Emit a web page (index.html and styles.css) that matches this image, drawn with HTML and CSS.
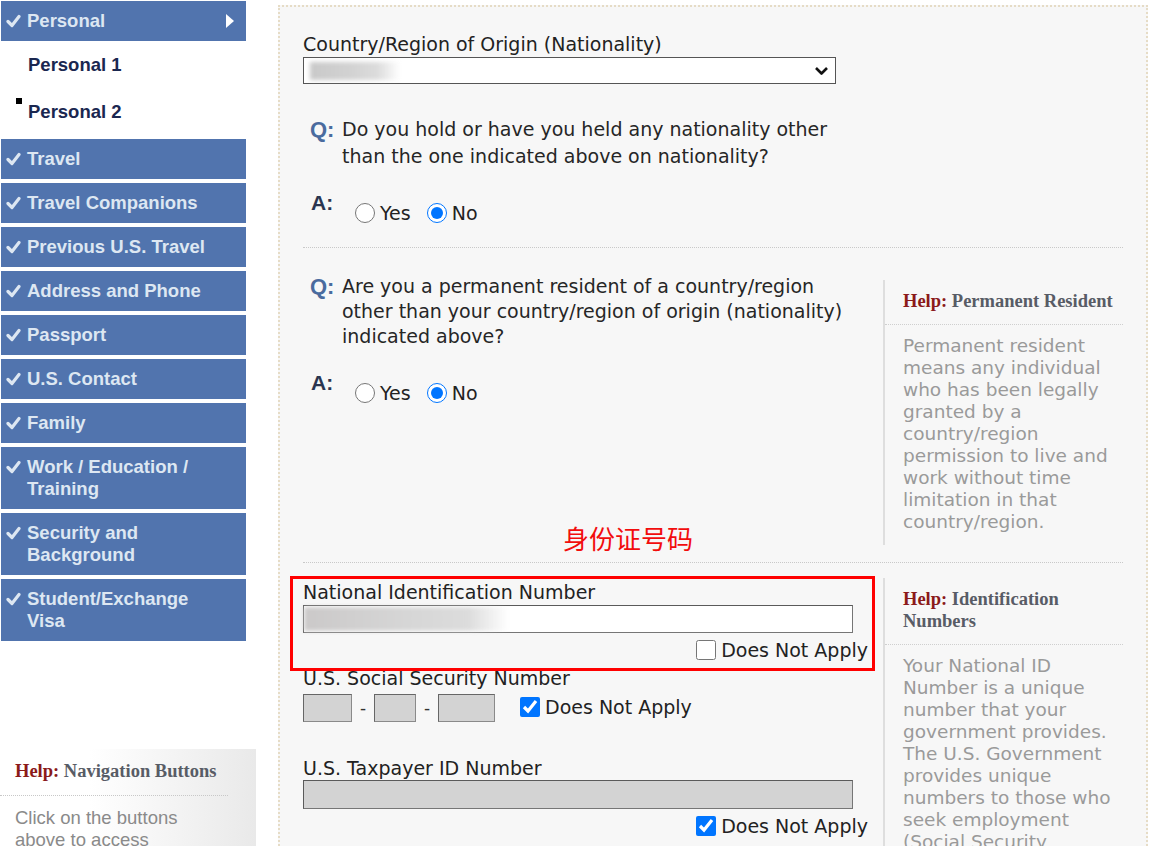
FILE: index.html
```html
<!DOCTYPE html>
<html lang="en">
<head>
<meta charset="utf-8">
<title>Personal 2</title>
<link rel="stylesheet" href="styles.css">
</head>
<body>
<div class="page">
  <aside class="sidebar">
    <ul class="nav">
      <li class="nav-item head">
        <svg class="chk" width="15" height="22" viewBox="0 0 15 22"><path d="M2 11.5 L6 15.5 L13 6.5" fill="none" stroke="#dde7f2" stroke-width="3.2" stroke-linecap="round" stroke-linejoin="round"/></svg>
        <span class="nav-label">Personal</span>
        <svg class="arrow" width="8" height="14" viewBox="0 0 8 14"><polygon points="0,0 8,7 0,14" fill="#ffffff"/></svg>
      </li>
      <li class="sub">
        <ul class="sublist">
          <li>Personal 1</li>
          <li class="current">Personal 2</li>
        </ul>
      </li>
      <li class="nav-item"><svg class="chk" width="15" height="22" viewBox="0 0 15 22"><path d="M2 11.5 L6 15.5 L13 6.5" fill="none" stroke="#dde7f2" stroke-width="3.2" stroke-linecap="round" stroke-linejoin="round"/></svg><span class="nav-label">Travel</span></li>
      <li class="nav-item"><svg class="chk" width="15" height="22" viewBox="0 0 15 22"><path d="M2 11.5 L6 15.5 L13 6.5" fill="none" stroke="#dde7f2" stroke-width="3.2" stroke-linecap="round" stroke-linejoin="round"/></svg><span class="nav-label">Travel Companions</span></li>
      <li class="nav-item"><svg class="chk" width="15" height="22" viewBox="0 0 15 22"><path d="M2 11.5 L6 15.5 L13 6.5" fill="none" stroke="#dde7f2" stroke-width="3.2" stroke-linecap="round" stroke-linejoin="round"/></svg><span class="nav-label">Previous U.S. Travel</span></li>
      <li class="nav-item"><svg class="chk" width="15" height="22" viewBox="0 0 15 22"><path d="M2 11.5 L6 15.5 L13 6.5" fill="none" stroke="#dde7f2" stroke-width="3.2" stroke-linecap="round" stroke-linejoin="round"/></svg><span class="nav-label">Address and Phone</span></li>
      <li class="nav-item"><svg class="chk" width="15" height="22" viewBox="0 0 15 22"><path d="M2 11.5 L6 15.5 L13 6.5" fill="none" stroke="#dde7f2" stroke-width="3.2" stroke-linecap="round" stroke-linejoin="round"/></svg><span class="nav-label">Passport</span></li>
      <li class="nav-item"><svg class="chk" width="15" height="22" viewBox="0 0 15 22"><path d="M2 11.5 L6 15.5 L13 6.5" fill="none" stroke="#dde7f2" stroke-width="3.2" stroke-linecap="round" stroke-linejoin="round"/></svg><span class="nav-label">U.S. Contact</span></li>
      <li class="nav-item"><svg class="chk" width="15" height="22" viewBox="0 0 15 22"><path d="M2 11.5 L6 15.5 L13 6.5" fill="none" stroke="#dde7f2" stroke-width="3.2" stroke-linecap="round" stroke-linejoin="round"/></svg><span class="nav-label">Family</span></li>
      <li class="nav-item"><svg class="chk" width="15" height="22" viewBox="0 0 15 22"><path d="M2 11.5 L6 15.5 L13 6.5" fill="none" stroke="#dde7f2" stroke-width="3.2" stroke-linecap="round" stroke-linejoin="round"/></svg><span class="nav-label">Work / Education /<br>Training</span></li>
      <li class="nav-item"><svg class="chk" width="15" height="22" viewBox="0 0 15 22"><path d="M2 11.5 L6 15.5 L13 6.5" fill="none" stroke="#dde7f2" stroke-width="3.2" stroke-linecap="round" stroke-linejoin="round"/></svg><span class="nav-label">Security and<br>Background</span></li>
      <li class="nav-item"><svg class="chk" width="15" height="22" viewBox="0 0 15 22"><path d="M2 11.5 L6 15.5 L13 6.5" fill="none" stroke="#dde7f2" stroke-width="3.2" stroke-linecap="round" stroke-linejoin="round"/></svg><span class="nav-label">Student/Exchange<br>Visa</span></li>
    </ul>
    <div class="side-help">
      <div class="help-title"><span class="help-word">Help:</span> Navigation Buttons</div>
      <div class="side-help-body">Click on the buttons above to access different sections of the application.</div>
    </div>
  </aside>

  <main class="panel">
    <section class="block block-one">
      <div class="lbl">Country/Region of Origin (Nationality)</div>
      <div class="select"><span class="blur blur-select"></span>
        <svg class="chev" width="15" height="10" viewBox="0 0 15 10"><polyline points="2,2 7.5,7.5 13,2" fill="none" stroke="#111" stroke-width="2.6" stroke-linejoin="round"/></svg>
      </div>
      <div class="q"><span class="q-mark">Q:</span><span class="q-text">Do you hold or have you held any nationality other than the one indicated above on nationality?</span></div>
      <div class="a"><span class="a-mark">A:</span>
        <div class="opts">
          <label class="opt"><input type="radio" name="r1">Yes</label>
          <label class="opt"><input type="radio" name="r1" checked>No</label>
        </div>
      </div>
    </section>

    <section class="block block-two">
      <div class="left">
        <div class="q q-wide"><span class="q-mark">Q:</span><span class="q-text">Are you a permanent resident of a country/region other than your country/region of origin (nationality) indicated above?</span></div>
        <div class="a"><span class="a-mark">A:</span>
          <div class="opts">
            <label class="opt"><input type="radio" name="r2">Yes</label>
            <label class="opt"><input type="radio" name="r2" checked>No</label>
          </div>
        </div>
      </div>
      <div class="help help-pr">
        <div class="help-title"><span class="help-word">Help:</span> Permanent Resident</div>
        <div class="help-body">Permanent resident means any individual who has been legally granted by a country/region permission to live and work without time limitation in that country/region.</div>
      </div>
    </section>

    <section class="block block-three">
      <div class="left">
        <div class="lbl">National Identification Number</div>
        <div class="txt"><span class="blur blur-id"></span></div>
        <div class="na"><label class="opt"><input type="checkbox">Does Not Apply</label></div>
        <div class="lbl lbl-ssn">U.S. Social Security Number</div>
        <div class="ssn">
          <span class="box box1"></span><span class="sep">-</span><span class="box box2"></span><span class="sep">-</span><span class="box box3"></span>
          <label class="opt opt-ssn"><input type="checkbox" checked>Does Not Apply</label>
        </div>
        <div class="lbl lbl-tax">U.S. Taxpayer ID Number</div>
        <div class="txt txt-off"></div>
        <div class="na"><label class="opt"><input type="checkbox" checked>Does Not Apply</label></div>
      </div>
      <div class="help help-id">
        <div class="help-title"><span class="help-word">Help:</span> Identification Numbers</div>
        <div class="help-body">Your National ID Number is a unique number that your government provides. The U.S. Government provides unique numbers to those who seek employment (Social Security Numbers) and for tax purposes.</div>
      </div>
    </section>

    <div class="note">身份证号码</div>
    <div class="mark-box"></div>
  </main>
</div>
</body>
</html>
```

FILE: styles.css
```css
html, body {
  margin: 0;
  padding: 0;
  height: 846px;
  overflow: hidden;
  background: #ffffff;
}

.page {
  display: flex;
  align-items: flex-start;
}

/* ---------- Sidebar ---------- */
.sidebar {
  width: 256px;
  flex: none;
  padding-top: 1px;
  font-family: "Liberation Sans", Arial, sans-serif;
}

.nav {
  list-style: none;
  margin: 0 0 0 1px;
  padding: 0;
  width: 245px;
}

.nav-item {
  display: flex;
  align-items: flex-start;
  background: #5174ae;
  color: #dde7f2;
  font-weight: bold;
  font-size: 18.5px;
  line-height: 22px;
  padding: 9px 12px 9px 5px;
  margin-bottom: 4px;
}

.nav-item.head {
  margin-bottom: 0;
  align-items: center;
}

.chk {
  flex: none;
  margin-right: 6px;
}

.nav-label {
  flex: 1;
}

.arrow {
  flex: none;
}

.sub {
  margin-bottom: 4px;
}

.sublist {
  list-style: none;
  margin: 0;
  padding: 0;
}

.sublist li {
  position: relative;
  height: 47px;
  line-height: 47px;
  padding-left: 27px;
  font-size: 18.5px;
  font-weight: bold;
  color: #1a2750;
}

.sublist li.current::before {
  content: "";
  position: absolute;
  left: 15px;
  top: 10px;
  width: 6px;
  height: 6px;
  background: #000;
}

.side-help {
  margin-top: 108px;
  height: 120px;
  background: linear-gradient(to right, #ffffff 35%, #e9e9e9 100%);
}

.side-help .help-title {
  padding: 11px 0 13px 15px;
  border-bottom: 1px dotted #c8c8c8;
  margin-right: 28px;
}

.side-help-body {
  width: 185px;
  padding: 11px 0 0 15px;
  font-size: 18.5px;
  line-height: 22px;
  color: #8a8a8a;
}

.help-title {
  font-family: "Liberation Serif", "Times New Roman", serif;
  font-weight: bold;
  font-size: 18.5px;
  line-height: 22px;
  color: #585c66;
}

.help-word {
  color: #8b1a1a;
}

/* ---------- Main panel ---------- */
.panel {
  position: relative;
  margin-left: 22px;
  margin-top: 5px;
  width: 870px;
  height: 900px;
  box-sizing: border-box;
  border-top: 2px dotted #e6dcc6;
  border-left: 2px dotted #e6dcc6;
  border-right: 2px dotted #e6dcc6;
  background: #f7f7f7;
  padding: 26px 23px 0 23px;
  font-family: "DejaVu Sans", Verdana, sans-serif;
  font-size: 19px;
  color: #222;
}

.block {
  border-bottom: 1px dotted #c9c9c9;
}

.block-one {
  padding-bottom: 23px;
}

.block-two,
.block-three {
  display: grid;
  grid-template-columns: 580px 240px;
  align-items: start;
}

.block-two {
  padding-bottom: 17px;
}

.block-two .left {
  padding-top: 26px;
}

.block-three {
  border-bottom: none;
}

.block-three .left {
  padding-top: 18px;
  width: 565px;
}

.lbl {
  line-height: 22px;
  white-space: nowrap;
}

.select {
  margin-top: 2px;
  width: 533px;
  height: 27px;
  box-sizing: border-box;
  border: 1px solid #555;
  background: #fff;
  display: flex;
  align-items: center;
  justify-content: space-between;
  padding: 0 6px 0 6px;
}

.blur {
  display: block;
  background: linear-gradient(to right, #c9c9c9 0%, #d2d2d2 45%, #dcdcdc 75%, rgba(230,230,230,0) 100%);
  filter: blur(2px);
}

.blur-select {
  width: 90px;
  height: 18px;
}

.blur-id {
  width: 205px;
  height: 24px;
  background: linear-gradient(to right, #cbc9c9 0%, #d6d6d6 50%, #dcdcdc 80%, rgba(235,235,235,0) 100%);
}

.chev {
  flex: none;
}

.q {
  margin-top: 32px;
  display: flex;
  align-items: flex-start;
  padding-left: 7px;
  line-height: 27px;
  color: #262626;
}

.q-wide {
  margin-top: 0;
  line-height: 25px;
}

.q-mark {
  flex: none;
  width: 32px;
  font-family: "Liberation Sans", Arial, sans-serif;
  font-weight: bold;
  font-size: 22px;
  color: #4a6b9e;
}

.q-text {
  width: 500px;
}

.q-wide .q-text {
  width: 520px;
}

.a {
  margin-top: 22px;
  display: flex;
  align-items: flex-start;
  padding-left: 8px;
}

.block-two .a {
  margin-top: 23px;
}

.a-mark {
  flex: none;
  width: 44px;
  line-height: 22px;
  font-family: "Liberation Sans", Arial, sans-serif;
  font-weight: bold;
  font-size: 21px;
  color: #2a3550;
}

.opts {
  display: flex;
  gap: 16px;
  margin-top: 10px;
}

.opt {
  display: flex;
  align-items: center;
  gap: 5px;
  line-height: 22px;
  white-space: nowrap;
}

.opt input {
  width: 20px;
  height: 20px;
  margin: 0;
  accent-color: #0075ff;
}

.txt {
  margin-top: 2px;
  width: 550px;
  height: 28px;
  box-sizing: border-box;
  border: 1px solid #767676;
  border-top-color: #5a5a5a;
  border-left-color: #5a5a5a;
  background: #fff;
  display: flex;
  align-items: center;
}

.txt-off {
  margin-top: 1px;
  height: 29px;
  background: #d3d3d3;
}

.na {
  margin-top: 6px;
  display: flex;
  justify-content: flex-end;
}

.lbl-ssn {
  margin-top: 6px;
}

.ssn {
  margin-top: 5px;
  display: flex;
  align-items: center;
}

.box {
  display: block;
  height: 28px;
  box-sizing: border-box;
  border: 1px solid #8a8a8a;
  border-top-color: #666;
  border-left-color: #666;
  background: #d3d3d3;
}

.box1 { width: 49px; }
.box2 { width: 42px; }
.box3 { width: 57px; }

.sep {
  width: 22px;
  text-align: center;
  font-size: 17px;
  color: #333;
}

.opt-ssn {
  margin-left: 25px;
  margin-top: -2px;
}

.lbl-tax {
  margin-top: 35px;
}

/* ---------- Help columns ---------- */
.help {
  border-left: 2px solid #dedede;
}

.help-pr {
  margin-top: 32px;
}

.help-id {
  margin-top: 15px;
  height: 400px;
}

.help .help-title {
  padding: 10px 5px 12px 18px;
  border-bottom: 1px dotted #cfcfcf;
}

.help-body {
  padding: 10px 8px 12px 18px;
  font-family: "DejaVu Sans", Verdana, sans-serif;
  font-size: 18.5px;
  line-height: 22px;
  color: #9a9a9a;
}

/* ---------- Annotations ---------- */
.note {
  position: absolute;
  left: 283px;
  top: 516px;
  font-family: "Noto Sans CJK SC", sans-serif;
  font-size: 26px;
  line-height: 30px;
  color: #f20d0d;
}

.mark-box {
  position: absolute;
  left: 10px;
  top: 569px;
  width: 585px;
  height: 95px;
  box-sizing: border-box;
  border: 3px solid #ff0000;
}
```
